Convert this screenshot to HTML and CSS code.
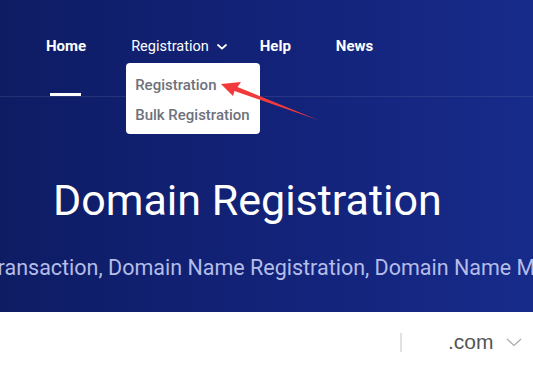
FILE: index.html
```html
<!DOCTYPE html>
<html lang="en">
<head>
  <meta charset="UTF-8">
  <title>Domain Registration</title>
  <meta name="viewport" content="width=device-width, initial-scale=1.0">
  <link rel="stylesheet" href="styles.css">
</head>
<body>
  <section class="hero">
    <nav class="nav">
      <a class="nav-item nav-home active" href="#">Home</a>
      <div class="nav-item nav-reg">
        <span>Registration</span>
        <svg class="nav-chevron" width="10" height="6" viewBox="0 0 10 6"><path d="M1 1l4 3.6L9 1" fill="none" stroke="#fff" stroke-width="1.8" stroke-linecap="round" stroke-linejoin="round"/></svg>
        <div class="dropdown">
          <a class="dropdown-item" href="#">Registration</a>
          <a class="dropdown-item" href="#">Bulk Registration</a>
        </div>
      </div>
      <a class="nav-item nav-help" href="#">Help</a>
      <a class="nav-item" href="#">News</a>
    </nav>

    <div class="hero-body">
      <h1 class="hero-title">Domain Registration</h1>
      <p class="hero-sub">Domain Name Transaction, Domain Name Registration, Domain Name Management</p>
    </div>

    <!-- annotation arrow drawn on top of the screenshot -->
    <svg class="annotation" width="533" height="140" viewBox="0 0 533 140">
      <polygon points="221,84 241,82 237.5,87 318,120 234.5,91 233,96" fill="#f23a3a"/>
    </svg>
  </section>

  <section class="search">
    <div class="search-bar">
      <span class="divider"></span>
      <span class="tld">.com</span>
      <svg class="tld-chevron" width="16" height="9" viewBox="0 0 16 9"><path d="M1 1l7 6.5L15 1" fill="none" stroke="#aaa" stroke-width="1.2"/></svg>
    </div>
  </section>
</body>
</html>
```

FILE: styles.css
```css
* {
  box-sizing: border-box;
  margin: 0;
  padding: 0;
}
body {
  font-family: Roboto, "Noto Sans", sans-serif;
  background-color: #fff;
  overflow: hidden;
}
a {
  text-decoration: none;
  color: inherit;
}

.hero {
  position: relative;
  height: 312px;
  background: linear-gradient(90deg, #0e1c64 0%, #13237a 55%, #172b8a 100%);
  color: #fff;
  overflow: hidden;
}

.nav {
  display: flex;
  align-items: center;
  height: 97px;
  padding-left: 46px;
  padding-bottom: 4px;
  border-bottom: 1px solid rgba(255, 255, 255, 0.09);
}
.nav-item {
  position: relative;
  display: flex;
  align-items: center;
  margin-right: 45px;
  font-size: 15px;
  font-weight: 700;
  color: #fff;
}
.nav-reg {
  font-size: 14.5px;
  font-weight: 400;
  margin-right: 33px;
}
.nav-chevron {
  margin-left: 8px;
  margin-top: 2px;
}
.nav-home.active::after {
  content: "";
  position: absolute;
  left: 4px;
  right: 5px;
  top: 56px;
  height: 3px;
  background-color: #fff;
}

.dropdown {
  position: absolute;
  top: 25px;
  left: -5px;
  width: 134px;
  height: 71px;
  padding: 7px 0 0 9px;
  background-color: #fff;
  border-radius: 4px;
  z-index: 2;
}
.dropdown-item {
  display: block;
  height: 30px;
  line-height: 30px;
  font-size: 15px;
  font-weight: 500;
  color: #6e717b;
  white-space: nowrap;
}

.hero-body {
  padding-top: 73px;
}
.hero-title {
  padding-left: 53px;
  font-size: 43px;
  font-weight: 400;
  line-height: 60px;
}
.hero-sub {
  margin-top: 25px;
  margin-left: -156px;
  white-space: nowrap;
  font-size: 21.5px;
  color: #b4bde8;
}

.annotation {
  position: absolute;
  top: 0;
  left: 0;
  pointer-events: none;
  z-index: 3;
}

.search {
  height: 58px;
}
.search-bar {
  display: flex;
  align-items: center;
  height: 100%;
  padding-left: 400px;
  padding-top: 2px;
}
.divider {
  width: 2px;
  height: 19px;
  background-color: #e1e2e6;
}
.tld {
  margin-left: 46px;
  font-family: "Liberation Sans", Arial, sans-serif;
  font-size: 21px;
  color: #555;
}
.tld-chevron {
  margin-left: 12px;
  margin-top: 1px;
}
```
